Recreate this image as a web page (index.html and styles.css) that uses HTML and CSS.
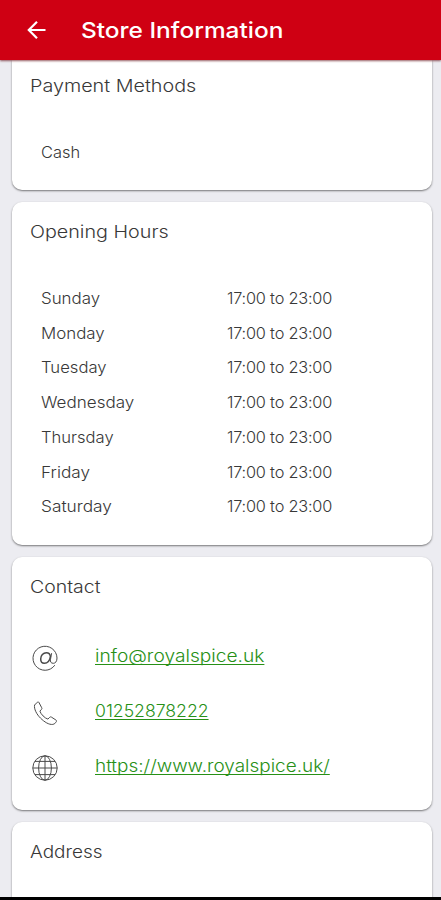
FILE: index.html
```html
<!DOCTYPE html>
<html lang="en">
<head>
<meta charset="utf-8">
<title>Store Information</title>
<link rel="stylesheet" href="styles.css">
</head>
<body>
<div class="screen">
  <header class="bar">
    <svg class="back" viewBox="0 0 20 20"><path d="M18.5 10H2M10 1.8L1.8 10l8.2 8.2"/></svg>
    <h1>Store Information</h1>
  </header>
  <main class="cards">
    <section class="card payment">
      <h2 class="w-payment">Payment Methods</h2>
      <p class="method"><span class="w-cash">Cash</span></p>
    </section>
    <section class="card opening">
      <h2 class="w-opening">Opening Hours</h2>
      <dl class="hours">
        <dt class="w-sun">Sunday</dt><dd>17:00 to 23:00</dd>
        <dt class="w-mon">Monday</dt><dd>17:00 to 23:00</dd>
        <dt class="w-tue">Tuesday</dt><dd>17:00 to 23:00</dd>
        <dt class="w-wed">Wednesday</dt><dd>17:00 to 23:00</dd>
        <dt class="w-thu">Thursday</dt><dd>17:00 to 23:00</dd>
        <dt class="w-fri">Friday</dt><dd>17:00 to 23:00</dd>
        <dt class="w-sat">Saturday</dt><dd>17:00 to 23:00</dd>
      </dl>
    </section>
    <section class="card contact">
      <h2 class="w-contact">Contact</h2>
      <ul class="links">
        <li>
          <svg class="icon" viewBox="0 0 26 26"><path d="M22.8 20.2A12 12 0 1 1 25 13c0 3.500-1.600 5.300-3.700 5.300-2.300 0-3.300-1.500-2.800-4l1.100-6.100"/><path class="bold" d="M18.400 11.500c-.3-2.300-1.700-3.800-4-3.800-3.200 0-5.700 2.900-5.700 6.300 0 2.600 1.400 4.300 3.600 4.300 3.100 0 5.500-2.700 6.100-6.800"/></svg>
          <a class="w-mail" href="mailto:info@royalspice.uk">info@royalspice.uk</a>
        </li>
        <li>
          <svg class="icon" viewBox="0 0 26 26"><path d="M5.400 2.200L2.600 5c-.8 4 2.100 9.400 6 13.200 3.800 3.800 8.400 6.700 12.200 6.200 1.500-.3 2.800-1.400 3.500-2.700.4-.7.200-1.300-.4-1.700l-4.500-2.900c-.7-.4-1.200-.3-1.800.3l-1.700 1.700c-3-.8-7.200-5-8-8l1.500-1.600c.6-.6.700-1.200.3-1.800L6.900 2.400c-.4-.6-1-.7-1.500-.2z"/></svg>
          <a class="w-phone" href="tel:01252878222">01252878222</a>
        </li>
        <li>
          <svg class="icon" viewBox="0 0 26 26"><circle cx="13" cy="13" r="12.200"/><ellipse cx="13" cy="13" rx="6.400" ry="12.200"/><path d="M13 .8v24.400M.8 13h24.400M2.800 6.400h20.400M2.800 19.600h20.400"/></svg>
          <a class="w-web" href="https://www.royalspice.uk/">https://www.royalspice.uk/</a>
        </li>
      </ul>
    </section>
    <section class="card address">
      <h2 class="w-address">Address</h2>
    </section>
  </main>
  <div class="system"></div>
</div>
</body>
</html>
```
FILE: styles.css
```css
* { box-sizing: border-box; margin: 0; padding: 0; }
body { font-family: Inter, "Open Sans", sans-serif; background: #ececf1; }
.screen { width: 441px; height: 900px; display: flex; flex-direction: column; overflow: hidden; }
.bar {
  position: relative;
  flex: none;
  display: flex;
  align-items: center;
  height: 60px;
  padding-left: 27px;
  background: #cf0013;
  color: #fff;
  box-shadow: 0 1px 2px rgba(90, 0, 10, .65);
}
.back { width: 20px; height: 20px; margin-right: 34px; fill: none; stroke: #fff; stroke-width: 2.2; }
h1 { font-size: 22px; line-height: 30px; font-weight: 500; white-space: nowrap; transform: scaleX(1.11); }
.cards { flex: 1; min-height: 0; display: flex; flex-direction: column; gap: 12px; padding: 0 9px 0 12px; overflow: hidden; }
.card { flex: none; padding: 18px 18px 0; border-radius: 10px; background: #fff; box-shadow: 0 1px 2px rgba(0, 0, 0, .5); }
h2 { font-size: 17px; line-height: 24px; font-weight: 300; color: #383838; white-space: nowrap; }
.payment { height: 130px; padding-top: 14px; border-radius: 0 0 10px 10px; }
.opening { height: 343px; }
.contact { height: 253px; }
.address { height: 90px; }
.method { margin: 44px 0 0 11px; font-size: 15.500px; line-height: 22px; font-weight: 300; color: #383838; }
.hours {
  display: grid;
  grid-template-columns: 185.500px 1fr;
  grid-auto-rows: 34.750px;
  align-items: center;
  margin: 37px 0 0 11px;
  font-size: 15.500px;
  font-weight: 300;
  color: #383838;
  white-space: nowrap;
}
.hours dd { letter-spacing: -.2px; transform: scaleX(1.053); }
.links { list-style: none; margin-top: 30px; }
.links li { display: flex; align-items: center; height: 55px; padding-left: 3px; }
.icon { width: 26px; height: 26px; margin: 3px 36px 0 -1px; fill: none; stroke: #4a4a4a; stroke-width: 1; overflow: visible; }
.icon .bold { stroke-width: 1.500; }
.links a { margin: -1px 0 0 1px; font-size: 17px; line-height: 24px; font-weight: 300; color: #279016; text-underline-offset: 2px; text-decoration-thickness: 1px; text-decoration-skip-ink: none; white-space: nowrap; }

/* Widened letterforms, fitted per label */
h1, h2, dt, dd, .method span, .links a { transform-origin: 0 50%; }
.method span { display: inline-block; }
.w-payment { transform: scaleX(1.162); }
.w-opening { transform: scaleX(1.16); }
.w-contact { transform: scaleX(1.145); }
.w-address { transform: scaleX(1.115); }
.w-cash { transform: scaleX(1.06); }
.w-sun { transform: scaleX(1.09); }
.w-mon { transform: scaleX(1.09); }
.w-tue { transform: scaleX(1.075); }
.w-wed { transform: scaleX(1.1); }
.w-thu { transform: scaleX(1.07); }
.w-fri { transform: scaleX(1.11); }
.w-sat { transform: scaleX(1.115); }
.w-mail { transform: scaleX(1.127); }
.w-phone { transform: scaleX(1.037); }
.w-web { transform: scaleX(1.114); }
.system { flex: none; height: 3px; background: #000; }
```
